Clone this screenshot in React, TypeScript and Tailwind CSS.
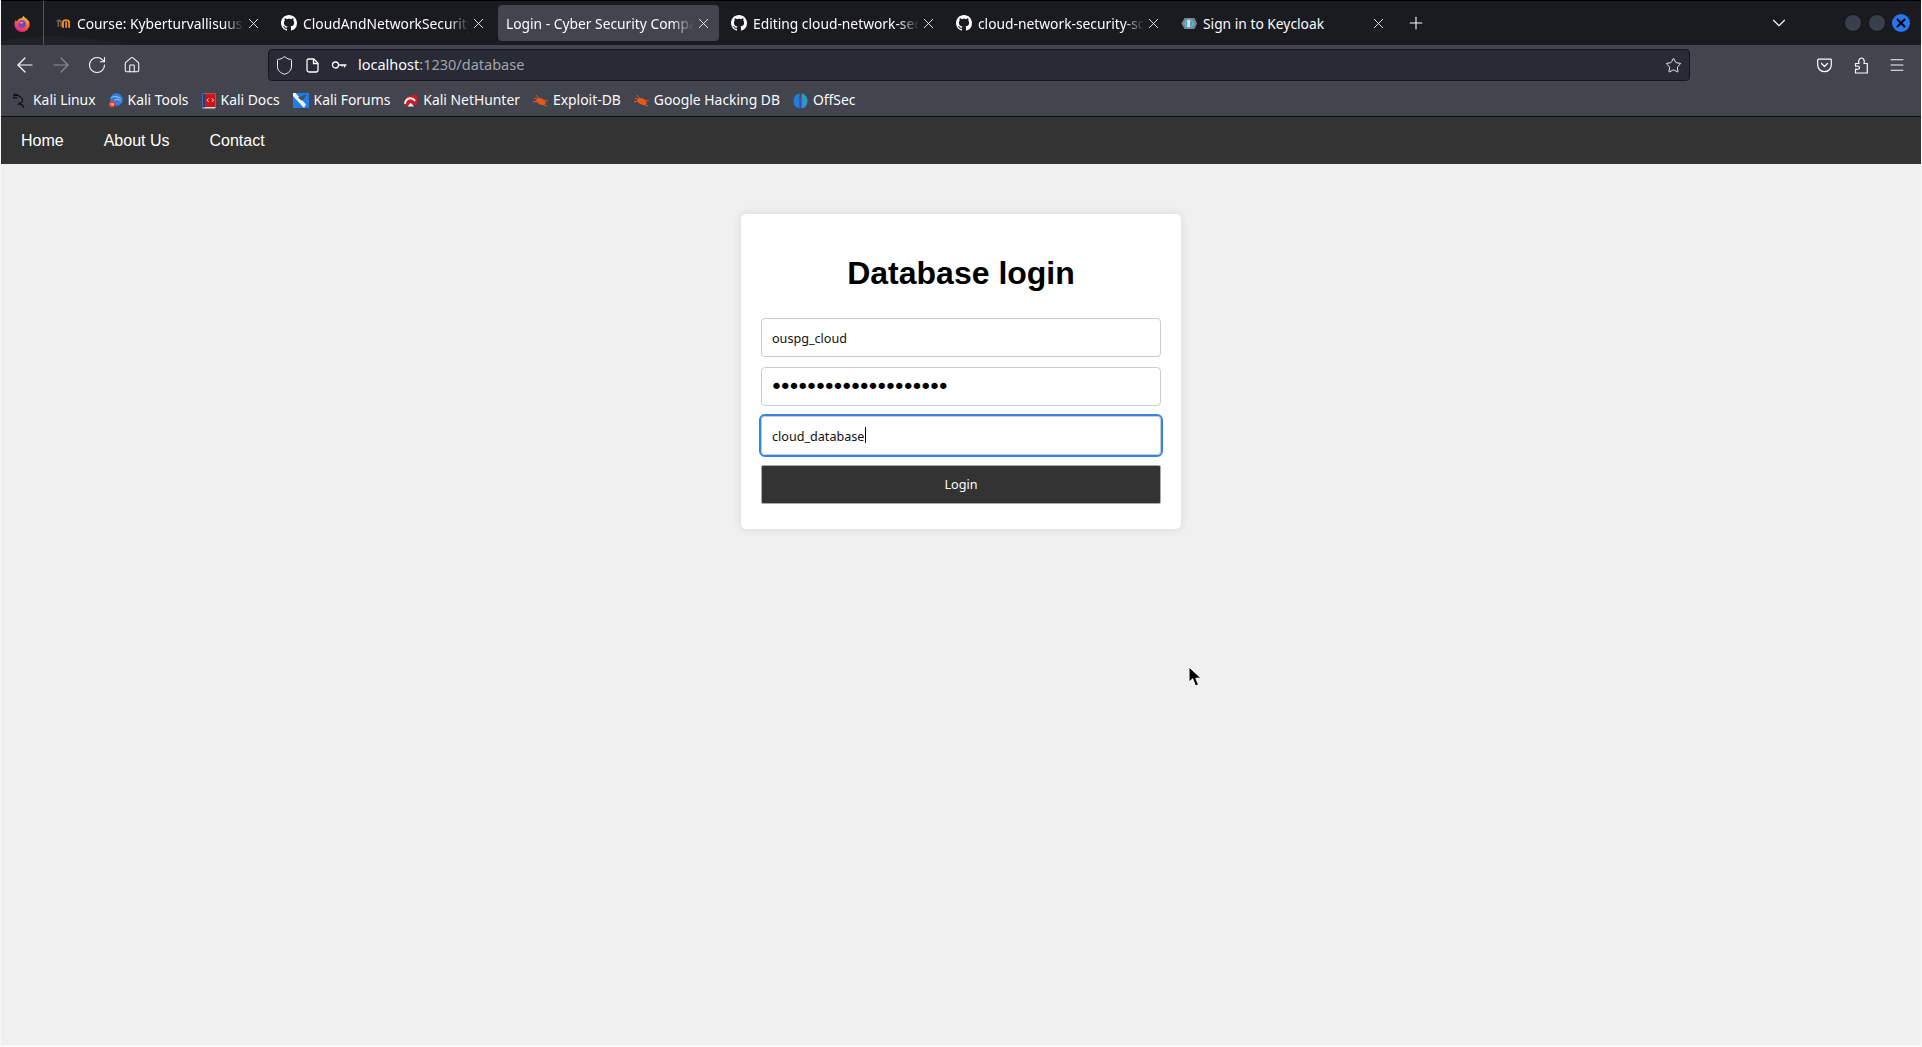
import React from "react";
import { ArrowLeft, ArrowRight, RotateCw, Home, Shield, Star, Menu, ChevronDown, X, Plus } from "lucide-react";

const ui = "font-['Noto_Sans',sans-serif]";

function GitHubIcon() {
  return (
    <svg width="16" height="16" viewBox="0 0 16 16" fill="#fbfbfe" className="shrink-0">
      <path d="M8 0C3.58 0 0 3.58 0 8c0 3.54 2.29 6.53 5.47 7.59.4.07.55-.17.55-.38 0-.19-.01-.82-.01-1.49-2.01.37-2.53-.49-2.69-.94-.09-.23-.48-.94-.82-1.13-.28-.15-.68-.52-.01-.53.63-.01 1.08.58 1.23.82.72 1.21 1.87.87 2.33.66.07-.52.28-.87.51-1.07-1.78-.2-3.64-.89-3.64-3.95 0-.87.31-1.59.82-2.15-.08-.2-.36-1.02.08-2.12 0 0 .67-.21 2.2.82.64-.18 1.32-.27 2-.27s1.36.09 2 .27c1.53-1.04 2.2-.82 2.2-.82.44 1.1.16 1.92.08 2.12.51.56.82 1.27.82 2.15 0 3.07-1.87 3.75-3.65 3.95.29.25.54.73.54 1.48 0 1.07-.01 1.93-.01 2.2 0 .21.15.46.55.38A8.01 8.01 0 0 0 16 8c0-4.42-3.58-8-8-8z" />
    </svg>
  );
}

function MoodleIcon() {
  return (
    <svg width="15" height="12" viewBox="0 0 16 12" className="shrink-0" fill="none">
      <path d="M0.500 4 4 2.500" stroke="#6b6b6b" strokeWidth="1.200" />
      <path d="M2.500 10V5c0-1.800 3-1.800 3 0v5" stroke="#7d6a55" strokeWidth="1.500" />
      <path d="M7.500 11V5.200c0-3 6.500-3 6.500 0V11" stroke="#f08a1d" strokeWidth="2" />
      <path d="M10.800 4.500V11" stroke="#f08a1d" strokeWidth="1.800" />
    </svg>
  );
}

function KeycloakIcon() {
  return (
    <svg width="16" height="13" viewBox="0 0 16 13" className="shrink-0">
      <path d="M3.500 1h10L16 6.500 13.500 12h-10L0.500 6.500z" fill="#7b8790" />
      <path d="M5.500 2.800 3 6.500l2.500 3.700h1.700L4.800 6.500l2.400-3.700z" fill="#39c5f2" />
      <path d="M9 2.800l2.400 3.700L9 10.200h1.800l2.500-3.700-2.500-3.700z" fill="#39c5f2" />
      <path d="M6.300 2.800h2.700v7.400H6.300z" fill="#e8f6fc" opacity="0.85" />
    </svg>
  );
}

function FirefoxIcon() {
  return (
    <svg width="16" height="17" viewBox="0 0 16 17">
      <defs>
        <linearGradient id="ffg" x1="0.800" y1="0" x2="0.300" y2="1">
          <stop offset="0" stopColor="#ffd23a" />
          <stop offset="0.500" stopColor="#ff6a2b" />
          <stop offset="1" stopColor="#e8178a" />
        </linearGradient>
      </defs>
      <path d="M9.500 0.500c.2 1.700 2 2.300 3.300 3.500C14.700 5.700 15.600 7.500 15.600 9.400a7.600 7.600 0 0 1-15.200 0c0-1.800.6-3.300 1.400-4.300.2.700.5 1.100 1 1.300C3.600 4.800 5.300 3.500 7 3.300 8.200 2.900 9 2 9.500.5z" fill="url(#ffg)" />
      <circle cx="8" cy="9" r="3.800" fill="#6f3fd6" />
      <path d="M3.800 7.600c1.700-1.200 4.400-1 6 .3-1.100-.1-2 .2-2.400 1-.8-.8-2.100-1.300-3.600-1.300z" fill="#ff9f2e" />
    </svg>
  );
}

function KaliIcon() {
  return (
    <svg width="16" height="16" viewBox="0 0 16 16" fill="none" stroke="#0a0a0c" strokeWidth="1.100" className="shrink-0">
      <path d="M1 3c3-1.200 6-.6 8 1.400 1.700 1.700 2 3.500 1 4.700-.9 1-2.700 1-3.500 1.900 1.900-.3 4.200.6 5.500 4" />
      <path d="M1.500 1c2 .1 3.600.6 5 1.700M1 5c1.500-.5 3-.5 4.200 0" />
    </svg>
  );
}

function ToolsIcon() {
  return (
    <svg width="14" height="15" viewBox="0 0 15 16" className="shrink-0">
      <circle cx="8" cy="7" r="6.800" fill="#2f7de1" />
      <path d="M2.500 5c3-2 6.500-1.500 10 1M6 8c1-2 4-2 7 1" stroke="#bcd9f7" strokeWidth="0.900" fill="none" />
      <circle cx="3.500" cy="12" r="3.500" fill="#e5312b" />
      <path d="M2.200 10.500v3M3.500 10.500v3M4.800 10.500v3" stroke="#fff" strokeWidth="0.700" />
    </svg>
  );
}

function DocsIcon() {
  return (
    <svg width="14" height="16" viewBox="0 0 14 16" className="shrink-0">
      <rect x="0.500" y="0.500" width="13" height="15" fill="#d8d8d8" />
      <rect x="0.500" y="0.500" width="2.500" height="14" fill="#1b3f8f" />
      <rect x="3" y="0.500" width="10.500" height="13.500" fill="#cf1418" />
      <path d="M6.500 5.500 5 7.200l1.500 1.700M10 5.500l1.500 1.700L10 8.900" stroke="#fff" strokeWidth="0.900" fill="none" />
    </svg>
  );
}

function ForumsIcon() {
  return (
    <svg width="16" height="15" viewBox="0 0 16 15" className="shrink-0">
      <rect width="16" height="15" y="0" fill="#1e7fe8" />
      <path d="M0 0h2.500L13 11.500 11 15 0 3z" fill="#eef3f8" />
      <path d="M5 4.500 14 1l-3 5-2.500 1.500z" fill="#3f5166" />
    </svg>
  );
}

function HunterIcon() {
  return (
    <svg width="15" height="15" viewBox="0 0 16 15" className="shrink-0">
      <path d="M1 13 4 3l11-2v11z" fill="#c5202c" />
      <path d="M2 11c1-6 7-8 11-3" stroke="#eeeeee" strokeWidth="2.200" fill="none" />
      <path d="M5 14l3-4 4 4z" fill="#eeeeee" />
    </svg>
  );
}

function BugIcon() {
  return (
    <svg width="15" height="12" viewBox="0 0 15 12" className="shrink-0">
      <ellipse cx="8" cy="6.500" rx="5" ry="3" transform="rotate(25 8 6.500)" fill="#e8591a" />
      <path d="M1 3 5 5M3 0l3 4M0 7l5-1M9 9l5 2M12 5l3 1" stroke="#e8591a" strokeWidth="1" />
    </svg>
  );
}

function OffSecIcon() {
  return (
    <svg width="15" height="16" viewBox="0 0 15 16" className="shrink-0">
      <path d="M6.500 0.500C3 1 0.500 4 0.500 8s2.500 7 6 7.500z" fill="#1f7fd6" />
      <path d="M8.500 0.500C12 1 14.500 4 14.500 8s-2.500 7-6 7.500z" fill="#2a9bc0" />
      <path d="M6.900 5h1.200l-.3 11h-.6z" fill="#5a3fd0" />
    </svg>
  );
}

function PocketIcon() {
  return (
    <svg width="15" height="15" viewBox="0 0 15 15" fill="none" stroke="#fbfbfe" strokeWidth="1.200">
      <path d="M1.500 1.200h12a.8.8 0 0 1 .8.8v4.900a6.800 6.800 0 0 1-13.600 0V2a.8.8 0 0 1 .8-.8z" />
      <path d="M4.500 5.500 7.500 8.500l3-3" strokeLinecap="round" strokeLinejoin="round" />
    </svg>
  );
}

function PuzzleIcon() {
  return (
    <svg width="14" height="17" viewBox="0 0 14 17" fill="none" stroke="#fbfbfe" strokeWidth="1.200" strokeLinejoin="round">
      <path d="M1.500 6.500H5C4 4.200 5 1 7.500 1S10.800 4.200 10 6.500h3.300V16H1.500v-3.800c3 .6 4-.6 4-1.700S4 8.500 1.500 9.300z" />
    </svg>
  );
}

function KeyIcon() {
  return (
    <svg width="16" height="16" viewBox="0 0 16 16" fill="none" stroke="#fbfbfe" strokeWidth="1.300">
      <circle cx="4.500" cy="8" r="3" />
      <path d="M7.500 8h8M13.500 8v2.500M11.200 8v1.500" />
    </svg>
  );
}

function PageIcon() {
  return (
    <svg width="13" height="15" viewBox="0 0 13 15" fill="none" stroke="#fbfbfe" strokeWidth="1.300">
      <path d="M2.500 1h5.300L12 5.200V12a2 2 0 0 1-2 2H3a2 2 0 0 1-2-2V2.500A1.500 1.500 0 0 1 2.500 1z" />
      <path d="M7.500 1v4.500H12" />
    </svg>
  );
}

function Cursor() {
  return (
    <svg width="15" height="22" viewBox="0 0 15 22" className="absolute left-[1188px] top-[666px]">
      <path d="M1 1v15l3.700-3.200L7.500 20l3-1.300-2.700-6.500H13z" fill="#000" stroke="#fff" strokeWidth="1" />
    </svg>
  );
}

function Tab({ icon, title, active, fade = true }: { icon?: React.ReactNode; title: string; active?: boolean; fade?: boolean }) {
  return (
    <div className={`relative flex h-9 w-[221px] shrink-0 items-center gap-[6px] rounded-[4px] pl-2 pr-[9px] ${active ? "bg-[#42444e]" : ""}`}>
      {icon}
      <span
        className={`min-w-0 flex-1 overflow-hidden whitespace-nowrap pt-[2px] text-[13.8px] leading-5 text-[#fbfbfe] ${
          fade ? "[mask-image:linear-gradient(to_right,#000_88%,transparent_100%)]" : ""
        }`}
      >
        {title}
      </span>
      <X size={17} strokeWidth={1.2} className="-mr-[2px] -ml-[5px] shrink-0 text-[#fbfbfe]" />
    </div>
  );
}

function Bookmark({ icon, label }: { icon: React.ReactNode; label: string }) {
  return (
    <div className="flex h-6 items-center gap-[5px] text-[13.9px] text-[#fbfbfe]">
      {icon}
      <span className="whitespace-nowrap">{label}</span>
    </div>
  );
}

export default function App() {
  return (
    <div className={`relative flex h-[1047px] w-[1922px] flex-col overflow-hidden bg-[#f8f8f8] px-px pb-[2px] ${ui}`}>
      <div className="relative flex h-[45px] shrink-0 items-center border-t border-black bg-[#1a1b21]">
        <svg width="140" height="12" viewBox="0 0 140 12" className="absolute bottom-0 left-0">
          <path d="M0 8C30 2 70 0 130 12H0z" fill="#202127" />
        </svg>
        <div className="relative flex h-full w-[43px] items-center justify-center border-r border-[#55565c] pr-[1px]">
          <FirefoxIcon />
        </div>
        <div className="relative flex gap-1 pl-[4px]">
          <Tab icon={<MoodleIcon />} title="Course: Kyberturvallisuus" />
          <Tab icon={<GitHubIcon />} title="CloudAndNetworkSecurity" />
          <Tab active title="Login - Cyber Security Company" />
          <Tab icon={<GitHubIcon />} title="Editing cloud-network-security" />
          <Tab icon={<GitHubIcon />} title="cloud-network-security-solutions" />
          <Tab icon={<KeycloakIcon />} title="Sign in to Keycloak" fade={false} />
        </div>
        <Plus size={20} strokeWidth={1.3} className="ml-[12px] text-[#fbfbfe]" />
        <ChevronDown size={22} strokeWidth={1.2} className="ml-[342px] text-[#fbfbfe]" />
        <div className="ml-[54px] flex items-center gap-[6px]">
          <span className="size-[18px] rounded-full border border-[#14141a] bg-[#3a3f4c]" />
          <span className="size-[18px] rounded-full border border-[#14141a] bg-[#3a3f4c]" />
          <span className="flex size-[18px] items-center justify-center rounded-full bg-[#2a76f0]">
            <X size={14} strokeWidth={3.4} className="text-black" />
          </span>
        </div>
      </div>

      <div className="flex h-[36px] shrink-0 items-center bg-[#42444e] pl-[12px] pt-1">
        <ArrowLeft size={24} strokeWidth={1.2} className="text-[#fbfbfe]" />
        <ArrowRight size={24} strokeWidth={1.2} className="ml-[12px] text-[#8b8c93]" />
        <RotateCw size={20} strokeWidth={1.3} className="ml-[14px] text-[#fbfbfe]" />
        <Home size={18} strokeWidth={1.4} className="ml-[16px] text-[#fbfbfe]" />
        <div className="ml-[127px] flex h-8 w-[1422px] items-center rounded-[4px] border border-[#15151c] bg-[#282a36] pl-[5px] pr-[7px]">
          <Shield size={21} strokeWidth={1.1} className="text-[#fbfbfe]" />
          <span className="ml-[11px] flex"><PageIcon /></span>
          <span className="ml-[12px] flex"><KeyIcon /></span>
          <span className="ml-[11px] text-[14.5px] text-[#fbfbfe]">
            localhost<span className="text-[#a3a4aa]">:1230/database</span>
          </span>
          <Star size={17} strokeWidth={1.3} className="ml-auto text-[#fbfbfe]" />
        </div>
        <span className="ml-[127px] flex"><PocketIcon /></span>
        <span className="ml-[22px] flex"><PuzzleIcon /></span>
        <Menu size={18} strokeWidth={1.3} className="ml-[20px] text-[#fbfbfe]" />
      </div>

      <div className="flex h-[36px] shrink-0 items-center gap-[13px] border-b border-[#0c0c0e] bg-[#42444e] pl-[11px] pt-[4px]">
        <Bookmark icon={<KaliIcon />} label="Kali Linux" />
        <Bookmark icon={<ToolsIcon />} label="Kali Tools" />
        <Bookmark icon={<DocsIcon />} label="Kali Docs" />
        <Bookmark icon={<ForumsIcon />} label="Kali Forums" />
        <Bookmark icon={<HunterIcon />} label="Kali NetHunter" />
        <Bookmark icon={<BugIcon />} label="Exploit-DB" />
        <Bookmark icon={<BugIcon />} label="Google Hacking DB" />
        <Bookmark icon={<OffSecIcon />} label="OffSec" />
      </div>

      <nav className="flex h-[47px] shrink-0 items-center gap-10 bg-[#333333] pl-5 font-['Liberation_Sans',sans-serif] text-[16px] text-white">
        <a>Home</a>
        <a>About Us</a>
        <a>Contact</a>
      </nav>

      <main className="flex flex-1 justify-center bg-[#f0f0f0] pt-[50px]">
        <div className="h-[315px] w-[440px] rounded-[5px] bg-white px-5 pt-5 shadow-[0_0_10px_rgba(0,0,0,0.1)]">
          <h1 className="mt-[21px] mb-[26px] text-center font-['Liberation_Sans',sans-serif] text-[32px] leading-[37px] font-bold text-black">Database login</h1>
          <div className="flex flex-col gap-[10px]">
            <input readOnly defaultValue="ouspg_cloud" className="h-[39px] w-full rounded-[4px] border border-[#cccccc] bg-white px-[10px] pt-px text-[12.6px] text-[#111111] outline-none" />
            <input readOnly type="password" defaultValue="passwordpassword1234" className="h-[39px] w-full rounded-[4px] border border-[#cccccc] bg-white pl-[8px] pr-[10px] font-['DejaVu_Sans',sans-serif] text-[22px] tracking-[-4.2px] text-black outline-none" />
            <div className="relative">
              <input readOnly defaultValue="cloud_database" className="h-[39px] w-full rounded-[4px] border border-[#cccccc] bg-white px-[10px] pt-px text-[12.6px] text-[#111111] outline-2 outline-offset-0 outline-[#3584e4]" />
              <span className="absolute left-[104px] top-[11px] h-[16px] w-px bg-black" />
            </div>
            <button className="h-[39px] w-full rounded-[2px] border border-[#aaaaaa] bg-[#333333] pt-px text-[12.6px] text-white">Login</button>
          </div>
        </div>
      </main>
      <Cursor />
    </div>
  );
}
